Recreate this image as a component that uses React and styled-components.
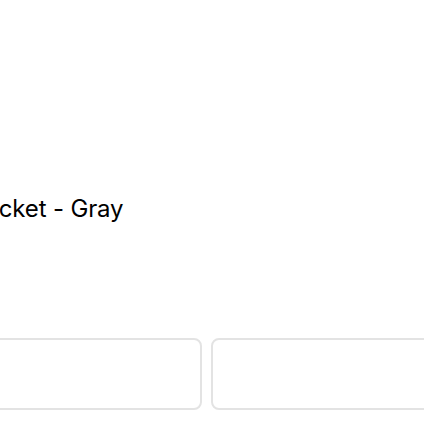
import styled, { createGlobalStyle } from "styled-components";

const GlobalStyle = createGlobalStyle`
  html, body {
    margin: 0;
    padding: 0;
    background: #ffffff;
    overflow: hidden;
  }
  body {
    font-family: Inter, "Liberation Sans", sans-serif;
    color: #111111;
  }
`;

const Page = styled.main`
  width: 653px;
  height: 424px;
  margin-left: -120px;
  padding-top: 194px;
  box-sizing: border-box;
`;

const ProductTitle = styled.h1`
  margin: 0;
  font-size: 24px;
  line-height: 29px;
  font-weight: 400;
  letter-spacing: -0.15px;
  color: #000000;
  white-space: nowrap;
`;

const OptionGrid = styled.div`
  display: grid;
  grid-template-columns: 1fr 1fr;
  gap: 9px;
  margin-top: 115px;
`;

const OptionCard = styled.button`
  height: 72px;
  background: #ffffff;
  border: 2px solid #e3e3e3;
  border-radius: 8px;
  padding: 0;
`;

const App = () => {
  return (
    <>
      <GlobalStyle />
      <Page>
        <ProductTitle>Leather Jacket - Gray</ProductTitle>
        <OptionGrid>
          <OptionCard aria-label="Option one" />
          <OptionCard aria-label="Option two" />
        </OptionGrid>
      </Page>
    </>
  );
};

export default App;
